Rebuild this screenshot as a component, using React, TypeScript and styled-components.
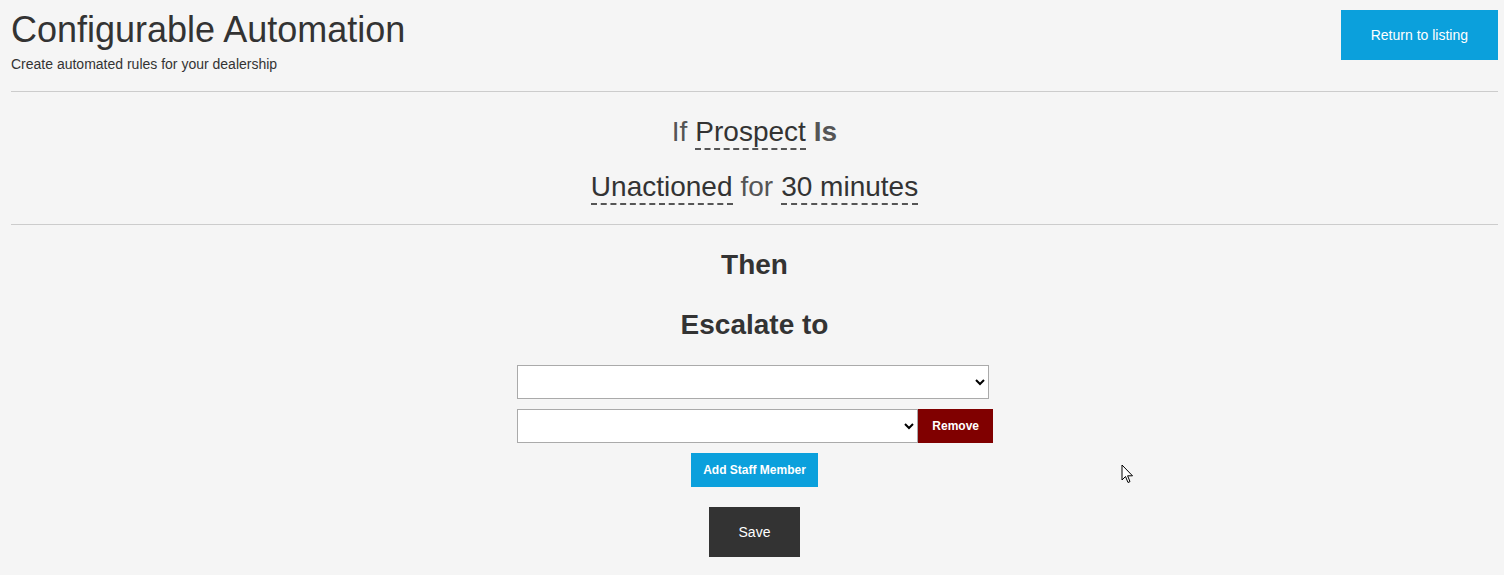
import React from 'react';
import styled, {createGlobalStyle} from 'styled-components';

const GlobalStyle = createGlobalStyle`
  html, body {
    margin: 0;
    padding: 0;
    background: #f5f5f5;
    font-family: "Liberation Sans", Arial, sans-serif;
    color: #333;
  }
`;

const Page = styled.div`
  position: relative;
  padding: 0 6px 0 11px;
`;

const Header = styled.div`
  display: flex;
  justify-content: space-between;
  align-items: flex-start;
  padding-top: 10px;
`;

const TitleBlock = styled.div`
  display: flex;
  flex-direction: column;
`;

const Title = styled.h1`
  margin: 0;
  font-size: 36px;
  font-weight: 400;
  line-height: 40px;
  color: #333;
`;

const Subtitle = styled.div`
  font-size: 14px;
  line-height: 20px;
  margin-top: 4px;
  color: #333;
`;

const Button = styled.button<{$bg: string; $w?: number; $h: number}>`
  border: 0;
  margin: 0;
  background: ${({$bg}) => $bg};
  color: #fff;
  font-family: "Liberation Sans", Arial, sans-serif;
  font-size: 14px;
  height: ${({$h}) => $h}px;
  padding: 0 ${({$w}) => $w ?? 12}px;
  cursor: pointer;
`;

const SmallButton = styled(Button)`
  font-size: 12px;
  font-weight: 700;
`;

const Divider = styled.hr<{$top?: number}>`
  border: 0;
  border-top: 1px solid #ccc;
  margin: ${({$top}) => $top ?? 0}px 0 0;
`;

const Condition = styled.div`
  display: flex;
  flex-direction: column;
  align-items: center;
  gap: 21px;
  padding: 24px 0 19px;
  font-size: 28px;
  line-height: 32px;
  color: #555;
`;

const Line = styled.div`
  display: flex;
  gap: 8px;
`;

const Choice = styled.span`
  color: #333;
  border-bottom: 2px dashed #555;
`;

const Strong = styled.span`
  font-weight: 700;
`;

const Action = styled.div`
  display: flex;
  flex-direction: column;
  align-items: center;
`;

const Heading = styled.h2<{$top: number; $bottom?: number}>`
  margin: ${({$top}) => $top}px 0 ${({$bottom}) => $bottom ?? 0}px;
  font-size: 28px;
  font-weight: 700;
  line-height: 32px;
  color: #333;
`;

const Form = styled.div`
  display: flex;
  flex-direction: column;
  align-items: center;
  gap: 10px;
`;

const SelectRow = styled.div`
  display: flex;
  width: 476px;
  margin-left: 1px;
`;

const Select = styled.select<{$w: number}>`
  width: ${({$w}) => $w}px;
  height: 34px;
  border: 1px solid #aaa;
  background: #fff;
  border-radius: 0;
  font-family: "Liberation Sans", Arial, sans-serif;
  font-size: 14px;
  margin: 0;
`;

const SaveButton = styled(Button)`
  margin-top: 10px;
`;

const Cursor = styled.svg`
  position: absolute;
  left: 1121px;
  top: 464px;
  pointer-events: none;
`;

export default function App() {
  return (
    <Page>
      <GlobalStyle />
      <Header>
        <TitleBlock>
          <Title>Configurable Automation</Title>
          <Subtitle>Create automated rules for your dealership</Subtitle>
        </TitleBlock>
        <Button $bg="#0ba0dc" $w={30} $h={50}>
          Return to listing
        </Button>
      </Header>
      <Divider $top={17} />
      <Condition>
        <Line>
          <span>If</span>
          <Choice>Prospect</Choice>
          <Strong>Is</Strong>
        </Line>
        <Line>
          <Choice>Unactioned</Choice>
          <span>for</span>
          <Choice>30 minutes</Choice>
        </Line>
      </Condition>
      <Divider />
      <Action>
        <Heading $top={24}>Then</Heading>
        <Heading $top={28} $bottom={24}>
          Escalate to
        </Heading>
        <Form>
          <SelectRow>
            <Select $w={472} />
          </SelectRow>
          <SelectRow>
            <Select $w={403} />
            <SmallButton $bg="#800000" $h={34} $w={14}>
              Remove
            </SmallButton>
          </SelectRow>
          <SmallButton $bg="#0ba0dc" $h={34} $w={12}>
            Add Staff Member
          </SmallButton>
          <SaveButton $bg="#333" $h={50} $w={30}>
            Save
          </SaveButton>
        </Form>
      </Action>
      <Cursor width="13" height="21" viewBox="0 0 13 21">
        <path d="M1 1 L1 16 L4.5 12.5 L7 18.5 L9 17.6 L6.6 11.8 L11.5 11.8 Z" fill="#fff" stroke="#000" strokeWidth="1" strokeLinejoin="round" />
      </Cursor>
    </Page>
  );
}
